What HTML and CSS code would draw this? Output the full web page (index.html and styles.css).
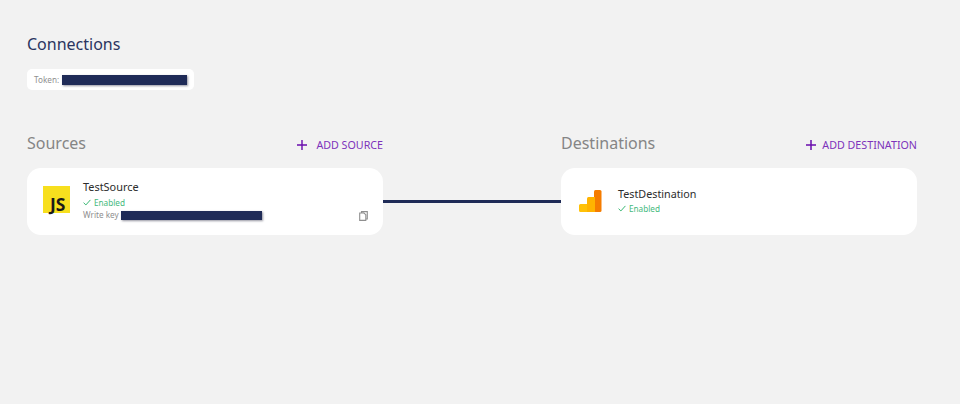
FILE: index.html
```html
<!DOCTYPE html>
<html lang="en">
<head>
<meta charset="utf-8">
<title>Connections</title>
<link rel="stylesheet" href="styles.css">
</head>
<body>
<main class="page">
  <h1 class="title">Connections</h1>
  <div class="token"><span class="token-label">Token:</span><span class="redact redact-token"></span></div>
  <div class="board">
    <section class="col">
      <header class="col-head">
        <h2 class="col-title">Sources</h2>
        <a class="add add-source">
          <svg class="plus" width="10" height="10" viewBox="0 0 10 10"><path d="M5 0v10M0 5h10" stroke="#6a0dad" stroke-width="1.400" fill="none"/></svg>
          <span>ADD SOURCE</span>
        </a>
      </header>
      <div class="card">
        <svg class="logo-js" width="27" height="27" viewBox="0 0 27 27"><rect width="27" height="27" fill="#f7df1e"/></svg>
        <span class="js-text">JS</span>
        <div class="info">
          <div class="name">TestSource</div>
          <div class="status"><svg class="check" width="8" height="7" viewBox="0 0 9 8"><path d="M.6 4.200 3.200 6.800 8.400 1" stroke="#2fb36b" stroke-width="1.100" fill="none"/></svg>Enabled</div>
          <div class="key"><span>Write key</span><span class="redact redact-key"></span></div>
        </div>
        <svg class="copy" width="9" height="10" viewBox="0 0 9 10"><path d="M2.500 1.500V.6h5.800v7.400h-1.300M.7 2h4.200l1.900 1.700v5.700H.7z" stroke="#8f8f8f" stroke-width="1.100" fill="#fff"/></svg>
      </div>
    </section>
    <div class="link"></div>
    <section class="col">
      <header class="col-head">
        <h2 class="col-title">Destinations</h2>
        <a class="add">
          <svg class="plus" width="10" height="10" viewBox="0 0 10 10"><path d="M5 0v10M0 5h10" stroke="#6a0dad" stroke-width="1.500" fill="none"/></svg>
          <span>ADD DESTINATION</span>
        </a>
      </header>
      <div class="card card-dest">
        <svg class="logo-ga" width="23" height="22" viewBox="0 0 23 22">
          <rect x="15" y="0" width="7.500" height="22" rx="1.500" fill="#f57c00"/>
          <path d="M8 8.500A1.500 1.500 0 0 1 9.500 7H16v15H8z" fill="#ffb300"/>
          <path d="M1.500 14H8v8H1.500A1.500 1.500 0 0 1 0 20.500v-5A1.500 1.500 0 0 1 1.500 14z" fill="#ffc107"/>
        </svg>
        <div class="info">
          <div class="name">TestDestination</div>
          <div class="status"><svg class="check" width="8" height="7" viewBox="0 0 9 8"><path d="M.6 4.200 3.200 6.800 8.400 1" stroke="#2fb36b" stroke-width="1.100" fill="none"/></svg>Enabled</div>
        </div>
      </div>
    </section>
  </div>
</main>
</body>
</html>
```
FILE: styles.css
```css
* { box-sizing: border-box; }
html, body { margin: 0; height: 100%; }
body {
  background: #f2f2f2;
  font-family: "Noto Sans", "Open Sans", sans-serif;
  overflow: hidden;
}
.page { padding: 33px 43px 0 27px; }
.title {
  margin: 0;
  font-size: 16px;
  line-height: 22px;
  font-weight: 400;
  color: #2a3560;
}
.token {
  display: inline-flex;
  align-items: center;
  width: 167px;
  height: 21px;
  margin-top: 14px;
  padding-left: 7px;
  background: #fff;
  border-radius: 5px;
  font-size: 8.200px;
  color: #8f8f8f;
  gap: 3px;
  vertical-align: top;
}
.redact {
  display: block;
  background: #1f2b57;
  box-shadow: 1px 1px 2px rgba(60, 60, 80, .55);
}
.redact-token { width: 125px; height: 10px; }
.redact-key { width: 141px; height: 9px; }
.board {
  display: flex;
  align-items: flex-end;
  margin-top: 40px;
}
.col { width: 356px; flex: none; }
.col-head {
  display: flex;
  align-items: center;
  justify-content: space-between;
  height: 26px;
  margin-bottom: 12px;
}
.col-title {
  margin: 0;
  font-size: 16px;
  font-weight: 400;
  color: #858585;
}
.add {
  display: flex;
  align-items: center;
  font-size: 10.700px;
  color: #7d33bb;
  padding-top: 4px;
}
.add-source { gap: 9px; }
.add:not(.add-source) { gap: 6px; }
.plus { display: block; }
.card {
  position: relative;
  display: flex;
  align-items: flex-start;
  height: 67px;
  background: #fff;
  border-radius: 14px;
  padding: 18px 16px;
}
.logo-js { display: block; flex: none; margin-right: 13px; }
.js-text {
  position: absolute;
  left: 23px;
  top: 27px;
  font-size: 17.500px;
  line-height: 18px;
  font-weight: 700;
  color: #1a1a1a;
}
.info { display: flex; flex-direction: column; margin-top: -7px; }
.name {
  font-size: 10.900px;
  line-height: 16px;
  color: #2c2c2c;
}
.status {
  display: flex;
  align-items: center;
  gap: 3px;
  font-size: 8.200px;
  line-height: 13px;
  margin-top: 1px;
  color: #45b97c;
}
.key {
  display: flex;
  align-items: center;
  gap: 2px;
  font-size: 8.200px;
  line-height: 12px;
  color: #8f8f8f;
}
.copy { position: absolute; right: 15px; bottom: 14px; }
.card-dest { padding: 22px 18px; }
.logo-ga { display: block; flex: none; margin-right: 16px; }
.card-dest .info { margin-top: -3px; }
.card-dest .name { line-height: 15px; font-size: 10.750px; }
.card-dest .status { margin-top: 0; }
.link {
  flex: none;
  width: 178px;
  height: 3px;
  margin-bottom: 32px;
  background: #1f2b57;
}
```
